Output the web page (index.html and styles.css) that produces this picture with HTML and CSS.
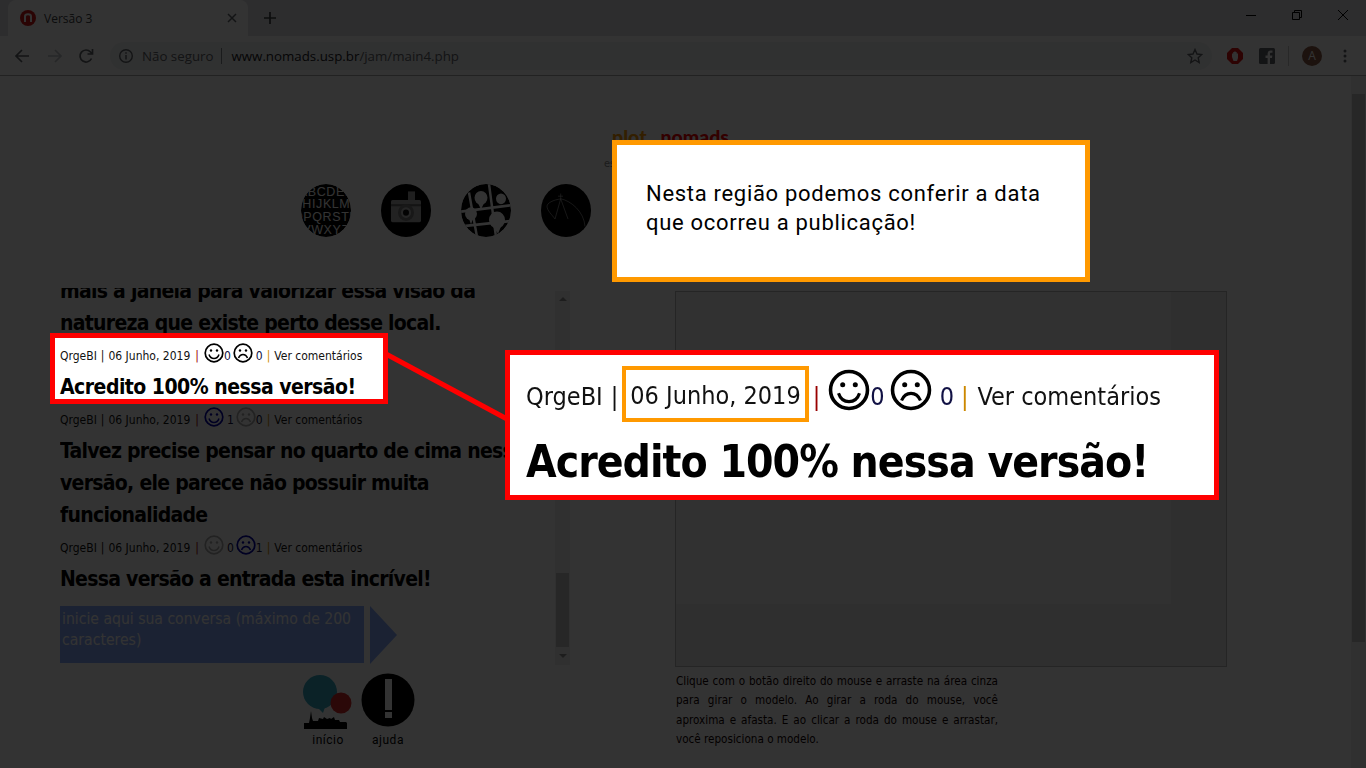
FILE: index.html
```html
<!DOCTYPE html>
<html lang="pt-BR">
<head>
	<meta charset="UTF-8">
	<title>Versão 3</title>
	<link rel="stylesheet" href="styles.css">
</head>
<body>
	<svg class="defs" width="0" height="0">
		<symbol id="smile" viewBox="0 0 20 20">
			<circle cx="10" cy="10" r="8.8" fill="none" stroke="currentColor" stroke-width="1.7"/>
			<circle cx="7" cy="7.5" r="1.2" fill="currentColor"/>
			<circle cx="13" cy="7.5" r="1.2" fill="currentColor"/>
			<path d="M5 11.5c1 3 3 4 5 4s4-1 5-4" fill="none" stroke="currentColor" stroke-width="1.5"/>
		</symbol>
		<symbol id="sad" viewBox="0 0 20 20">
			<circle cx="10" cy="10" r="8.8" fill="none" stroke="currentColor" stroke-width="1.7"/>
			<circle cx="7" cy="7.5" r="1.2" fill="currentColor"/>
			<circle cx="13" cy="7.5" r="1.2" fill="currentColor"/>
			<path d="M5.5 15c1-2.4 2.6-3.4 4.5-3.4s3.500 1 4.500 3.400" fill="none" stroke="currentColor" stroke-width="1.5"/>
		</symbol>
	</svg>

	<div class="tabstrip">
		<div class="tab">
			<svg class="favicon" width="16" height="16" viewBox="0 0 16 16">
				<circle cx="8" cy="8" r="8" fill="#d01818"/>
				<path d="M5 12V6.500C5 5 6 4.300 8 4.300s3 .7 3 2.200V12" fill="none" stroke="#fff" stroke-width="2"/>
			</svg>
			<span class="tab-title">Versão 3</span>
			<svg class="tab-close" width="10" height="10" viewBox="0 0 10 10">
				<path d="M1 1l8 8M9 1l-8 8" stroke="#5f6368" stroke-width="1.500"/>
			</svg>
		</div>
		<svg class="new-tab" width="12" height="12" viewBox="0 0 12 12">
			<path d="M6 0v12M0 6h12" stroke="#3c4043" stroke-width="1.700"/>
		</svg>
		<div class="window-btns">
			<svg width="10" height="10" viewBox="0 0 10 10"><path d="M0 5.500h10" stroke="#000" stroke-width="1"/></svg>
			<svg width="10" height="10" viewBox="0 0 10 10"><path d="M.5 2.500h7v7h-7zM2.500 2.500V.5h7v7h-2" fill="none" stroke="#000"/></svg>
			<svg width="10" height="10" viewBox="0 0 10 10"><path d="M0 0l10 10M10 0L0 10" stroke="#000"/></svg>
		</div>
	</div>

	<div class="toolbar">
		<svg class="nav-btn" width="16" height="16" viewBox="0 0 16 16"><path d="M15 8H2M8 2L2 8l6 6" fill="none" stroke="#5f6368" stroke-width="1.700"/></svg>
		<svg class="nav-btn off" width="16" height="16" viewBox="0 0 16 16"><path d="M1 8h13M8 2l6 6-6 6" fill="none" stroke="#bdc1c6" stroke-width="1.700"/></svg>
		<svg class="nav-btn" width="16" height="16" viewBox="0 0 16 16"><path d="M13.500 10.500A6 6 0 1 1 12.500 4L14 5.500M14.500 1v5h-5" fill="none" stroke="#5f6368" stroke-width="1.700"/></svg>
		<div class="omnibox">
			<svg width="16" height="16" viewBox="0 0 16 16">
				<circle cx="8" cy="8" r="6.300" fill="none" stroke="#5f6368" stroke-width="1.400"/>
				<path d="M8 7v4.500M8 4.300v1.400" stroke="#5f6368" stroke-width="1.500"/>
			</svg>
			<span class="not-secure">Não seguro</span>
			<span class="omni-sep"></span>
			<span class="url">www.nomads.usp.br<span class="url-path">/jam/main4.php</span></span>
			<svg class="star" width="16" height="16" viewBox="0 0 16 16">
				<path d="M8 1.500l2 4.500 4.800.5-3.600 3.200 1 4.800L8 12l-4.200 2.500 1-4.800L1.200 6.500 6 6z" fill="none" stroke="#5f6368" stroke-width="1.400"/>
			</svg>
		</div>
		<svg class="ext adblock" width="16" height="16" viewBox="0 0 16 16">
			<path d="M5 0h6l5 5v6l-5 5H5l-5-5V5z" fill="#e01010"/>
			<path d="M5 9V5.500h1.200V4h1v-.5h1.500V4h1v1.500H11V10l-1 3H6.500z" fill="#fff"/>
		</svg>
		<svg class="ext facebook" width="16" height="16" viewBox="0 0 16 16">
			<rect width="16" height="16" rx="1.500" fill="#5f6368"/>
			<path d="M11 16v-6h2l.4-2.500H11V6c0-.8.300-1.200 1.200-1.200h1.300V2.600c-.5-.1-1.200-.2-1.900-.2C10 2.400 8.600 3.600 8.600 5.700v1.800H6.500V10h2.100v6z" fill="#fff"/>
		</svg>
		<span class="toolbar-sep"></span>
		<span class="avatar">A</span>
		<svg class="menu-dots" width="4" height="14" viewBox="0 0 4 14">
			<circle cx="2" cy="2" r="1.500" fill="#5f6368"/>
			<circle cx="2" cy="7" r="1.500" fill="#5f6368"/>
			<circle cx="2" cy="12" r="1.500" fill="#5f6368"/>
		</svg>
	</div>

	<div class="page">
		<div class="site">
			<div class="brand"><span class="brand-a">plot</span> <span class="brand-dot">.</span> <span class="brand-b">nomads</span></div>
			<div class="tagline">espaço para colaborar em projeto</div>

			<div class="top-icons">
				<svg width="50" height="53" viewBox="0 0 50 50" preserveAspectRatio="none">
					<clipPath id="abc-clip"><circle cx="25" cy="25" r="25"/></clipPath>
					<g clip-path="url(#abc-clip)">
						<circle cx="25" cy="25" r="25" fill="#000"/>
						<g class="abc-rows">
							<text x="25" y="11" text-anchor="middle">ABCDEF</text>
							<text x="25" y="23" text-anchor="middle">GHIJKLMN</text>
							<text x="25" y="35" text-anchor="middle">OPQRSTU</text>
							<text x="25" y="47" text-anchor="middle">VWXYZ</text>
						</g>
					</g>
				</svg>
				<svg width="50" height="53" viewBox="0 0 50 50" preserveAspectRatio="none">
					<circle cx="25" cy="25" r="25" fill="#000"/>
					<rect x="27" y="7" width="7" height="9" fill="#999"/>
					<rect x="10" y="15" width="30" height="21" rx="1.500" fill="#aaa"/>
					<rect x="10" y="19" width="30" height="2" fill="#666"/>
					<circle cx="25" cy="27" r="8" fill="#777"/>
					<circle cx="25" cy="27" r="5" fill="#bbb"/>
					<circle cx="25" cy="27" r="3" fill="#111"/>
				</svg>
				<svg width="50" height="53" viewBox="0 0 50 50" preserveAspectRatio="none">
					<clipPath id="map-clip"><circle cx="25" cy="25" r="25"/></clipPath>
					<g clip-path="url(#map-clip)">
						<circle cx="25" cy="25" r="25" fill="#000"/>
						<path d="M0 26l50-6M28 0l7 50M8 8l8 42M0 40l50-5" stroke="#fff" stroke-width="2.500" fill="none"/>
						<circle cx="20" cy="13" r="6.500" fill="#fff"/>
						<path d="M17 18l3 6 3-6z" fill="#fff"/>
						<circle cx="40" cy="14" r="5" fill="#fff"/>
						<circle cx="10" cy="28" r="6" fill="#fff"/>
						<path d="M8 33l2 5 2-5z" fill="#fff"/>
						<circle cx="36" cy="34" r="8" fill="#fff"/>
						<path d="M32 40l5 7 3-7z" fill="#fff"/>
					</g>
				</svg>
				<svg width="50" height="53" viewBox="0 0 50 50" preserveAspectRatio="none">
					<circle cx="25" cy="25" r="25" fill="#000"/>
					<path d="M19.700 9v5M17 11.500h5M19.700 14L14 33M19.700 14L27 33M20 14C30 16 43 26 44 40M20 14C12 15 6 18 6 21c0 4 5 8 8 12" fill="none" stroke="#bbb" stroke-width=".6"/>
				</svg>
			</div>

			<div class="columns">
				<div class="chat">
					<div class="chat-body">
						<div class="feed">
							<p class="post">mais a janela para valorizar essa visão da natureza que existe perto desse local.</p>
							<div class="meta under-tut">
								<span>QrgeBI</span><span class="sep">|</span><span>06 Junho, 2019</span><span class="sep red">|</span>
								<svg class="face"><use href="#smile"/></svg><span class="count">0</span>
								<svg class="face"><use href="#sad"/></svg><span class="count gap">0</span><span class="sep amber">|</span><span>Ver comentários</span>
							</div>
							<p class="post under-tut">Acredito 100% nessa versão!</p>
							<div class="meta">
								<span>QrgeBI</span><span class="sep">|</span><span>06 Junho, 2019</span><span class="sep red">|</span>
								<svg class="face voted"><use href="#smile"/></svg><span class="count gap">1</span>
								<svg class="face muted"><use href="#sad"/></svg><span class="count">0</span><span class="sep amber">|</span><span>Ver comentários</span>
							</div>
							<p class="post">Talvez precise pensar no quarto de cima nessa versão, ele parece não possuir muita funcionalidade</p>
							<div class="meta">
								<span>QrgeBI</span><span class="sep">|</span><span>06 Junho, 2019</span><span class="sep red">|</span>
								<svg class="face muted"><use href="#smile"/></svg><span class="count gap">0</span>
								<svg class="face voted"><use href="#sad"/></svg><span class="count">1</span><span class="sep amber">|</span><span>Ver comentários</span>
							</div>
							<p class="post">Nessa versão a entrada esta incrível!</p>
						</div>
						<div class="composer">
							<div class="composer-input">inicie aqui sua conversa (máximo de 200 caracteres)</div>
							<svg class="composer-send" width="27" height="58" viewBox="0 0 27 58"><path d="M0 0l27 29L0 58z"/></svg>
						</div>
					</div>
					<div class="chat-scroll">
						<span class="arrow-up"></span>
						<div class="chat-track"><div class="chat-thumb"></div></div>
						<span class="arrow-down"></span>
					</div>
				</div>

				<div class="viewer-col">
					<div class="viewer"><div class="viewer-canvas"></div></div>
					<p class="viewer-help">Clique com o botão direito do mouse e arraste na área cinza para girar o modelo. Ao girar a roda do mouse, você aproxima e afasta. E ao clicar a roda do mouse e arrastar, você reposiciona o modelo.</p>
				</div>
			</div>

			<div class="bottom-nav">
				<div class="bottom-item">
					<svg width="54" height="57" viewBox="0 0 54 57">
						<circle cx="19" cy="19" r="17" fill="#39a9c4"/>
						<path d="M17 35l5 5 2-6z" fill="#39a9c4"/>
						<circle cx="40" cy="30" r="10.500" fill="#d42a2a"/>
						<path d="M3 56v-6h5l1-5 1-7 1 7 1 3h5l1-3 4 1 1-2 3 2 3-1 1 1 3-2 1 3h4l1 2h6l1 1v6z" fill="#000"/>
					</svg>
					<span>início</span>
				</div>
				<div class="bottom-item">
					<svg width="54" height="57" viewBox="0 0 54 57">
						<circle cx="27" cy="27" r="26.500" fill="#000"/>
						<rect x="24" y="6" width="7" height="31" fill="#fff"/>
						<rect x="24" y="39" width="7" height="6" fill="#fff"/>
					</svg>
					<span>ajuda</span>
				</div>
			</div>
		</div>
		<div class="page-scroll"><div class="page-thumb"></div></div>
	</div>

	<div class="tutorial">
		<svg class="tut-line" width="1366" height="768" viewBox="0 0 1366 768"><path d="M386 354L507 419" stroke="#f00" stroke-width="5"/></svg>

		<div class="tut-note">Nesta região podemos conferir a data que ocorreu a publicação!</div>

		<div class="tut-small">
			<div class="meta">
				<span>QrgeBI</span><span class="sep">|</span><span>06 Junho, 2019</span><span class="sep red">|</span>
				<svg class="face"><use href="#smile"/></svg><span class="count">0</span>
				<svg class="face"><use href="#sad"/></svg><span class="count gap">0</span><span class="sep amber">|</span><span>Ver comentários</span>
			</div>
			<p class="post">Acredito 100% nessa versão!</p>
		</div>

		<div class="tut-zoom">
			<div class="meta">
				<span>QrgeBI</span><span class="sep">|</span><span class="date-mark">06 Junho, 2019</span><span class="sep red">|</span>
				<svg class="face"><use href="#smile"/></svg><span class="count">0</span>
				<svg class="face"><use href="#sad"/></svg><span class="count gap">0</span><span class="sep amber">|</span><span>Ver comentários</span>
			</div>
			<p class="post">Acredito 100% nessa versão!</p>
		</div>
	</div>
</body>
</html>
```

FILE: styles.css
```css
*{
	margin: 0;
	padding: 0;
	box-sizing: border-box;
}
html,body{
	width: 1366px;
	height: 768px;
	overflow: hidden;
}
body{
	background: #fff;
	font-family: "DejaVu Sans", sans-serif;
	font-stretch: condensed;
	display: flex;
	flex-direction: column;
}
.defs{
	display: block;
	height: 0;
}

/* browser */
.tabstrip{
	height: 36px;
	flex: none;
	background: #dee1e6;
	display: flex;
	align-items: flex-end;
	padding-left: 8px;
}
.tab{
	width: 240px;
	height: 36px;
	background: #fff;
	border-radius: 8px 8px 0 0;
	display: flex;
	align-items: center;
	padding: 0 11px 0 12px;
	font-family: "Open Sans", sans-serif;
	font-stretch: normal;
	font-size: 12px;
	color: #3c4043;
}
.tab-title{
	margin-left: 8px;
	flex: 1;
}
.new-tab{
	align-self: center;
	margin-left: 16px;
}
.window-btns{
	margin-left: auto;
	align-self: flex-start;
	display: flex;
	gap: 36px;
	padding: 10px 18px 0 0;
}
.toolbar{
	height: 40px;
	flex: none;
	background: #fff;
	border-bottom: 1px solid #a8a8a8;
	display: flex;
	align-items: center;
	padding-left: 14px;
}
.nav-btn{
	margin-right: 15px;
}
.nav-btn.off{
	margin-right: 15px;
}
.nav-btn:first-child{
	margin-right: 17px;
}
.omnibox{
	width: 1102px;
	height: 28px;
	margin-left: 1px;
	border-radius: 14px;
	background: #f1f3f4;
	display: flex;
	align-items: center;
	padding: 0 9px 0 8px;
	font-family: "Open Sans", sans-serif;
	font-stretch: normal;
	font-size: 13.300px;
}
.not-secure{
	color: #5f6368;
	margin-left: 8px;
}
.omni-sep{
	width: 1px;
	height: 16px;
	background: #80868b;
	margin: 0 9px 0 8px;
}
.url{
	color: #202124;
}
.url-path{
	color: #5f6368;
}
.star{
	margin-left: auto;
}
.ext{
	flex: none;
}
.adblock{
	margin-left: 15px;
}
.facebook{
	margin-left: 16px;
}
.toolbar-sep{
	width: 1px;
	height: 20px;
	background: #c8c8c8;
	margin: 0 13px;
}
.avatar{
	width: 20px;
	height: 20px;
	border-radius: 50%;
	background: #8a5a45;
	color: #fff;
	font-family: "Open Sans", sans-serif;
	font-stretch: normal;
	font-size: 12px;
	line-height: 20px;
	text-align: center;
}
.menu-dots{
	margin-left: 21px;
}

/* page */
.page{
	flex: 1;
	display: flex;
	overflow: hidden;
}
.site{
	flex: 1;
	min-width: 0;
	display: flex;
	flex-direction: column;
}
.page-scroll{
	width: 15px;
	flex: none;
	background: #f1f1f1;
	padding: 18px 1px 0;
}
.page-thumb{
	height: 548px;
	background: #c1c1c1;
}
.brand{
	height: 26px;
	margin: 48px 0 0 -10px;
	text-align: center;
	font-family: "Lato", sans-serif;
	font-stretch: normal;
	font-weight: 900;
	font-size: 19.500px;
	line-height: 26px;
	white-space: pre;
}
.brand-a,.brand-dot{
	color: #f90;
}
.brand-b{
	color: #f00;
}
.tagline{
	height: 14px;
	margin-top: 7px;
	padding-left: 604px;
	font-size: 11px;
	line-height: 14px;
	color: #888;
	white-space: nowrap;
}
.top-icons{
	display: flex;
	gap: 30px;
	margin: 13px 0 0 301px;
	height: 53px;
}
.abc-rows{
	fill: #fff;
	font-family: "Liberation Sans", sans-serif;
	font-size: 12.500px;
	letter-spacing: .6px;
}
.columns{
	display: flex;
	margin-top: 46px;
	height: 384px;
}
.chat{
	width: 570px;
	flex: none;
	display: flex;
	padding-left: 60px;
}
.chat-body{
	width: 495px;
	flex: none;
	margin-top: 5px;
	overflow: hidden;
}
.feed{
	margin-top: -13px;
}
.post{
	font-size: 21px;
	line-height: 32px;
	letter-spacing: -.72px;
	font-weight: bold;
	color: #000;
}
.under-tut{
	visibility: hidden;
}
.meta{
	height: 32px;
	padding-top: 2px;
	display: flex;
	align-items: center;
	font-size: 12px;
	color: #111;
	white-space: nowrap;
}
.sep{
	margin: 0 4px;
}
.sep.red{
	color: #900;
	margin: 0 5px;
}
.sep.amber{
	color: #c80;
	margin: 0 4px;
}
.face{
	width: 20px;
	height: 20px;
	flex: none;
	margin: -7px 0 0;
	color: #000;
}
.count + .face{
	margin-left: 2px;
}
.face.voted{
	color: #00a;
}
.face.muted{
	color: #aaa;
}
.count{
	color: #114;
}
.count.gap{
	margin-left: 3px;
}
.composer{
	display: flex;
	gap: 6px;
	margin-top: 11px;
}
.composer-input{
	width: 304px;
	height: 57px;
	padding: 3px 2px;
	background: #88aaff;
	color: #fff;
	font-size: 15.600px;
	line-height: 21px;
}
.composer-send{
	fill: #88aaff;
}
.chat-scroll{
	width: 15px;
	flex: none;
	display: flex;
	flex-direction: column;
	align-items: center;
	margin: 8px 0 2px;
	background: #f1f1f1;
}
.arrow-up,.arrow-down{
	flex: none;
	width: 0;
	height: 0;
	margin: 6px 0;
	border-left: 4px solid transparent;
	border-right: 4px solid transparent;
}
.arrow-up{
	border-bottom: 4px solid #909090;
}
.arrow-down{
	margin: 7px 0;
	border-top: 4px solid #909090;
}
.chat-track{
	flex: 1;
	width: 100%;
	display: flex;
	flex-direction: column;
	justify-content: flex-end;
	padding: 0 1px;
}
.chat-thumb{
	height: 74px;
	background: #c1c1c1;
}
.viewer-col{
	margin: 8px 0 0 105px;
	width: 552px;
}
.viewer{
	height: 376px;
	border: 1px solid #bbb;
	background: #e8e8e8;
}
.viewer-canvas{
	width: 495px;
	height: 312px;
	background: #f4f4f4;
}
.viewer-help{
	width: 323px;
	margin-top: 5px;
	padding-left: 1px;
	font-size: 11.600px;
	line-height: 19.400px;
	text-align: justify;
	color: #100;
}
.bottom-nav{
	display: flex;
	gap: 6px;
	margin: 6px 0 0 301px;
}
.bottom-item{
	width: 54px;
	display: flex;
	flex-direction: column;
	align-items: center;
	font-family: "Roboto", sans-serif;
	font-stretch: normal;
	font-size: 12px;
	letter-spacing: .5px;
	color: #000;
}
.bottom-item span{
	margin-top: 3px;
}

/* tutorial layer */
.tutorial{
	position: absolute;
	left: 0;
	top: 0;
	width: 1366px;
	height: 768px;
	background: rgba(0,0,0,.8);
}
.tut-line{
	position: absolute;
	left: 0;
	top: 0;
}
.tut-note{
	position: absolute;
	left: 612px;
	top: 140px;
	width: 478px;
	height: 142px;
	padding: 34px 40px 0 29px;
	border: 5px solid #f90;
	background: #fff;
	color: #000;
	font-family: "Roboto", sans-serif;
	font-stretch: normal;
	font-size: 22px;
	line-height: 29px;
	letter-spacing: .7px;
}
.tut-small{
	position: absolute;
	left: 50px;
	top: 333px;
	width: 338px;
	height: 71px;
	padding: 3px 0 0 5px;
	border: 5px solid #f00;
	background: #fff;
}
.tut-small .post{
	margin-top: 2px;
	letter-spacing: -.52px;
	white-space: nowrap;
}
.tut-small .meta{
	height: 28px;
}
.tut-zoom{
	position: absolute;
	left: 505px;
	top: 350px;
	width: 714px;
	height: 150px;
	padding: 11px 0 0 16px;
	border: 5px solid #f00;
	background: #fff;
}
.tut-zoom .meta{
	height: 56px;
	padding-top: 4px;
	font-size: 25px;
	filter: blur(.4px);
}
.tut-zoom .sep{
	margin: 0 8px;
}
.tut-zoom .sep.red{
	margin: 0 6px 0 8px;
}
.tut-zoom .sep.amber{
	margin: 0 9px 0 7px;
}
.tut-zoom .face{
	width: 42px;
	height: 42px;
	margin: -13px 0 0 2px;
}
.tut-zoom .count + .face{
	margin-left: 5px;
}
.tut-zoom .count.gap{
	margin-left: 8px;
}
.tut-zoom .post{
	margin-top: 12px;
	font-size: 44px;
	line-height: 56px;
	letter-spacing: -.98px;
	white-space: nowrap;
	filter: blur(.4px);
}
.date-mark{
	border: 4px solid #f90;
	height: 56px;
	line-height: 44px;
	padding: 4px 4px 0;
	margin: -4px -4px 0;
}
```
